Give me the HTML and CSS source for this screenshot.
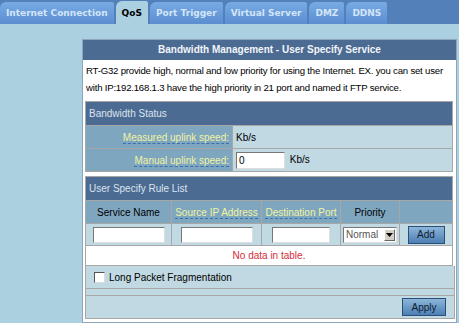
FILE: index.html
```html
<!DOCTYPE html>
<html lang="en">
<head>
<title>QoS</title>
<link rel="stylesheet" href="styles.css">
</head>
<body>
<div class="tabs">
    <div class="tab">Internet Connection</div>
    <div class="tab active">QoS</div>
    <div class="tab">Port Trigger</div>
    <div class="tab">Virtual Server</div>
    <div class="tab">DMZ</div>
    <div class="tab">DDNS</div>
</div>

<div class="page">
  <div class="panel">
    <div class="panel-title">Bandwidth Management - User Specify Service</div>
    <div class="desc">RT-G32 provide high, normal and low priority for using the Internet. EX. you can set user with IP:192.168.1.3 have the high priority in 21 port and named it FTP service.</div>

    <table class="grid status">
      <tr><td colspan="2" class="head">Bandwidth Status</td></tr>
      <tr>
        <td class="label"><span class="hint">Measured uplink speed:</span></td>
        <td class="value">Kb/s</td>
      </tr>
      <tr>
        <td class="label"><span class="hint">Manual uplink speed:</span></td>
        <td class="value"><input type="text" class="speed" value="0"> Kb/s</td>
      </tr>
    </table>

    <table class="grid rules">
      <tr><td colspan="5" class="head">User Specify Rule List</td></tr>
      <tr class="cols">
        <td class="c1">Service Name</td>
        <td class="c2"><span class="hint">Source IP Address</span></td>
        <td class="c3"><span class="hint">Destination Port</span></td>
        <td class="c4">Priority</td>
        <td class="c5"></td>
      </tr>
      <tr class="inputs">
        <td><input type="text" class="in-name"></td>
        <td><input type="text" class="in-ip"></td>
        <td><input type="text" class="in-port"></td>
        <td>
          <div class="select">
            <span>Normal</span>
            <span class="arrow"><svg width="7" height="4" viewBox="0 0 7 4"><path d="M0 0h7L3.5 4z" fill="#000"/></svg></span>
          </div>
        </td>
        <td><button class="btn add">Add</button></td>
      </tr>
      <tr><td colspan="5" class="empty">No data in table.</td></tr>
    </table>

    <div class="options">
      <div class="opt-row"><span class="check"></span>Long Packet Fragmentation</div>
      <div class="opt-gap"></div>
      <div class="opt-apply"><button class="btn apply">Apply</button></div>
    </div>
  </div>
</div>
</body>
</html>
```

FILE: styles.css
```css
body {
  margin: 0;
  background: #abd0df;
  font-family: "Liberation Sans", Arial, sans-serif;
  font-size: 10px;
  color: #000;
}
.tabs {
  display: flex;
  align-items: flex-end;
  gap: 2px;
  height: 24px;
  background: #5480b9;
}
.tab {
  height: 22px;
  line-height: 23px;
  padding: 0 6px;
  font-family: "DejaVu Sans", Verdana, sans-serif;
  font-weight: bold;
  font-size: 9px;
  color: #d3e5f8;
  background: linear-gradient(#78aae4, #5b8ecf);
  border-top-left-radius: 6px;
  border-top-right-radius: 2px;
}
.tab.active {
  height: 23px;
  line-height: 25px;
  color: #000;
  background: #abd0df;
}
.page {
  padding: 15px 2px 0 82px;
}
.panel {
  width: 373px;
  padding-bottom: 3px;
  background: #fff;
  border: 1px solid #8ea6bd;
}
.panel-title {
  height: 20px;
  line-height: 20px;
  text-align: center;
  background: #4c6b93;
  color: #f2f5f9;
  font-weight: bold;
  font-size: 10px;
}
.desc {
  height: 36px;
  padding: 2px 3px 3px;
  line-height: 17px;
  font-size: 9.6px;
  letter-spacing: -0.2px;
}
.grid {
  width: 368px;
  margin: 0 2px;
  border-collapse: collapse;
  border: 1px solid #a7a7a7;
}
.grid td {
  padding: 0;
  border: 1px solid #a7a7a7;
  white-space: nowrap;
}
.grid .head {
  height: 23px;
  padding-left: 3px;
  background: #4c6b93;
  color: #dbe4ee;
}
.status .label {
  width: 143px;
  height: 22px;
  padding-right: 3px;
  text-align: right;
  background: #7fa6bf;
}
.status .value {
  padding-left: 3px;
  background: #c1d9e3;
}
.hint {
  color: #f0f3a0;
  border-bottom: 1px dashed #3a6fb0;
}
.speed {
  width: 43px;
  height: 15px;
  padding: 0 2px;
  margin: 0 2px 0 0;
  border: 1px solid #777;
  border-right-color: #ddd;
  border-bottom-color: #ddd;
  font: 10px "Liberation Sans", Arial, sans-serif;
  vertical-align: middle;
}
.rules {
  margin-top: 4px;
}
.cols td {
  height: 22px;
  text-align: center;
  background: #7fa6bf;
}
.c1 { width: 85px; }
.c2 { width: 89px; }
.c3 { width: 78px; }
.c4 { width: 58px; }
.inputs td {
  height: 21px;
  text-align: center;
  background: #c1d9e3;
}
.inputs input {
  height: 14px;
  margin: 0;
  padding: 0 2px;
  border: 1px solid #777;
  border-right-color: #ddd;
  border-bottom-color: #ddd;
  vertical-align: middle;
}
.in-name { width: 66px; }
.in-ip { width: 66px; }
.in-port { width: 52px; }
.select {
  display: inline-flex;
  align-items: center;
  justify-content: space-between;
  width: 50px;
  height: 14px;
  padding-left: 2px;
  border: 1px solid #777;
  border-right-color: #ddd;
  border-bottom-color: #ddd;
  background: #fff;
  color: #555;
  vertical-align: middle;
  text-align: left;
}
.arrow {
  display: flex;
  align-items: center;
  justify-content: center;
  width: 11px;
  height: 12px;
  margin-right: 1px;
  background: #d4d0c8;
  border: 1px solid #fff;
  border-right-color: #666;
  border-bottom-color: #666;
  box-sizing: border-box;
}
.btn {
  height: 18px;
  padding: 0;
  border: 1px solid #2c4f77;
  background: linear-gradient(#8cb5d9, #4d7fb4);
  color: #0d1b2c;
  font: 10px "Liberation Sans", Arial, sans-serif;
  vertical-align: middle;
}
.add { width: 37px; }
.empty {
  height: 19px;
  text-align: center;
  color: #d62b3b;
  background: #fff;
}
.options {
  width: 368px;
  margin: 0 2px;
  border: 1px solid #a7a7a7;
  border-top: none;
  background: #c1d9e3;
}
.opt-row {
  display: flex;
  align-items: center;
  height: 22px;
  padding-left: 8px;
  border-bottom: 1px solid #a7a7a7;
}
.check {
  width: 9px;
  height: 9px;
  margin-right: 4px;
  background: #fff;
  border: 1px solid #555;
  border-right-color: #ddd;
  border-bottom-color: #ddd;
}
.opt-gap {
  height: 6px;
  border-bottom: 1px solid #a7a7a7;
}
.opt-apply {
  display: flex;
  justify-content: flex-end;
  align-items: center;
  height: 22px;
  padding-right: 8px;
}
.apply { width: 44px; }
```
